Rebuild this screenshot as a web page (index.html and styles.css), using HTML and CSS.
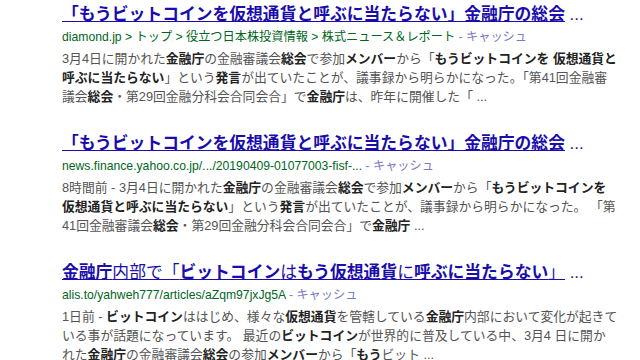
FILE: index.html
```html
<!DOCTYPE html>
<html lang="ja">
<head>
    <meta charset="UTF-8">
    <meta name="viewport" content="width=device-width, initial-scale=1.0">
    <title>検索結果</title>
    <link rel="stylesheet" href="styles.css">
</head>
<body>
    <div class="results">
        <div class="result">
            <h3 class="title"><a href="#"><b>「もうビットコインを仮想通貨と呼ぶに当たらない」金融庁の総会</b></a> ...</h3>
            <div class="url">diamond.jp &gt; トップ &gt; 役立つ日本株投資情報 &gt; 株式ニュース＆レポート <span class="cache">- キャッシュ</span></div>
            <div class="snippet">
                3月4日に開かれた<b>金融庁</b>の金融審議会<b>総会</b>で参加<b>メンバー</b>から「<b>もうビットコインを 仮想通貨と</b><br>
                <b>呼ぶに当たらない</b>」という<b>発言</b>が出ていたことが、議事録から明らかになった。「第41回金融審<br>
                議会<b>総会</b>・第29回金融分科会合同会合」で<b>金融庁</b>は、昨年に開催した「 ...
            </div>
        </div>

        <div class="result">
            <h3 class="title"><a href="#"><b>「もうビットコインを仮想通貨と呼ぶに当たらない」金融庁の総会</b></a> ...</h3>
            <div class="url">news.finance.yahoo.co.jp/.../20190409-01077003-fisf-... <span class="cache">- キャッシュ</span></div>
            <div class="snippet">
                8時間前 - 3月4日に開かれた<b>金融庁</b>の金融審議会<b>総会</b>で参加<b>メンバー</b>から「<b>もうビットコインを</b><br>
                <b>仮想通貨と呼ぶに当たらない</b>」という<b>発言</b>が出ていたことが、議事録から明らかになった。 「第<br>
                41回金融審議会<b>総会</b>・第29回金融分科会合同会合」で<b>金融庁</b> ...
            </div>
        </div>

        <div class="result">
            <h3 class="title"><a href="#"><b>金融庁</b>内部で「<b>ビットコイン</b>は<b>もう仮想通貨</b>に<b>呼ぶに当たらない</b>」</a> ...</h3>
            <div class="url">alis.to/yahweh777/articles/aZqm97jxJg5A <span class="cache">- キャッシュ</span></div>
            <div class="snippet">
                1日前 - <b>ビットコイン</b>ははじめ、様々な<b>仮想通貨</b>を管轄している<b>金融庁</b>内部において変化が起きて<br>
                いる事が話題になっています。 最近の<b>ビットコイン</b>が世界的に普及している中、3月4 日に開か<br>
                れた<b>金融庁</b>の金融審議会<b>総会</b>の参加<b>メンバー</b>から「<b>もう</b>ビット ...
            </div>
        </div>
    </div>
</body>
</html>
```

FILE: styles.css
```css
/* 検索結果ページ */
body {
    margin: 0;
    background-color: #ffffff;
    font-family: "Liberation Sans", "Noto Sans CJK JP", sans-serif;
}

.results {
    padding: 4px 0 0 62px;
}

.result {
    margin-bottom: 27px;
}

/* タイトル */
.title {
    margin: 0;
    font-size: 16.8px;
    font-weight: normal;
    line-height: 22px;
    color: #1a0dab;
    white-space: nowrap;
}

.title a {
    color: #1a0dab;
    text-decoration: underline;
}

/* URL行 */
.url {
    margin-top: 2px;
    font-size: 12.2px;
    line-height: 18px;
    color: #006621;
    white-space: nowrap;
}

.cache {
    color: #7b7bc4;
}

/* 説明文 */
.snippet {
    margin-top: 3px;
    font-size: 12.8px;
    line-height: 19px;
    color: #545454;
    white-space: nowrap;
}

.snippet b {
    color: #222;
}
```
